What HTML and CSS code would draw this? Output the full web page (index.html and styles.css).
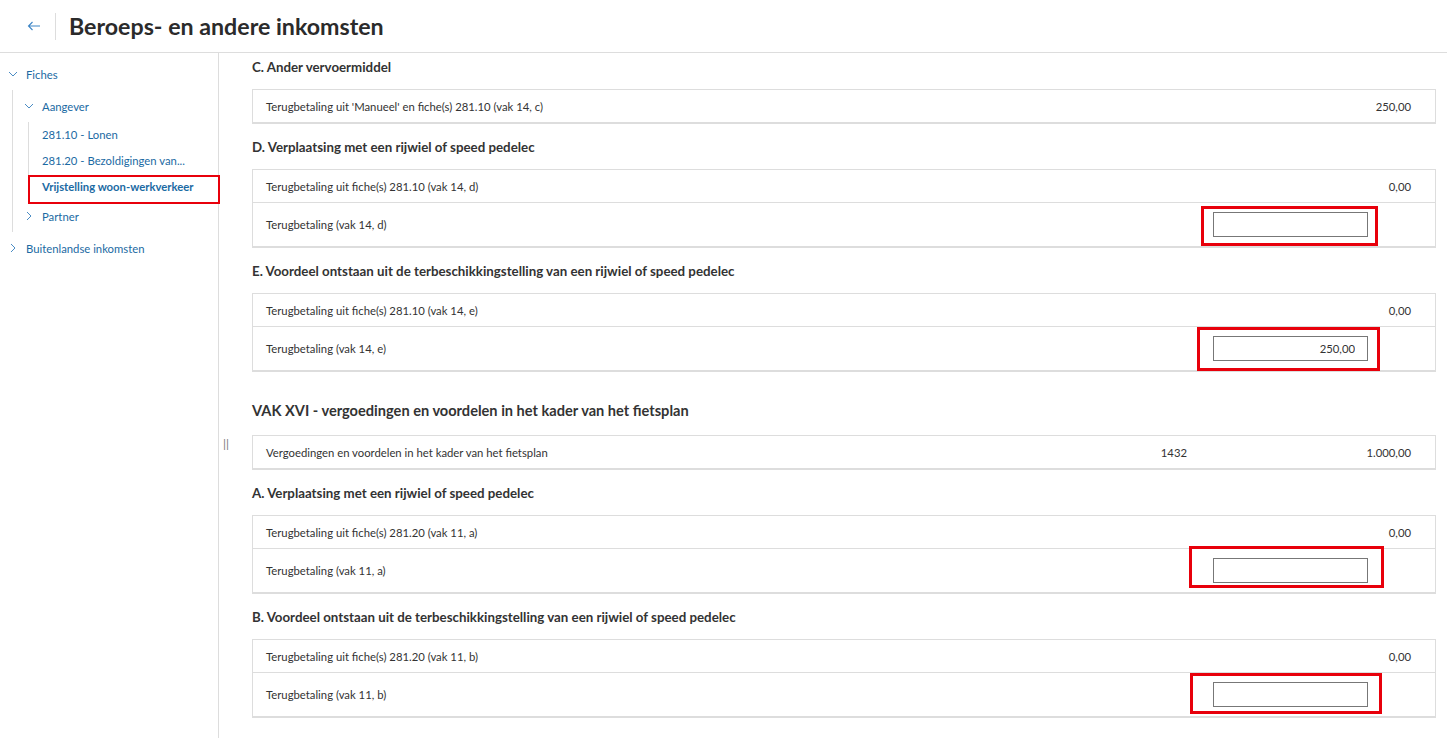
FILE: index.html
```html
<!DOCTYPE html>
<html lang="nl">
<head>
    <meta charset="UTF-8">
    <meta name="viewport" content="width=device-width, initial-scale=1.0">
    <title>Beroeps- en andere inkomsten</title>
    <link rel="stylesheet" href="styles.css">
</head>
<body>
    <header class="topbar">
        <button class="back" aria-label="Terug">
            <svg width="14" height="10" viewBox="0 0 14 10"><path d="M13 5H1.5M5.5 1L1.5 5l4 4" fill="none" stroke="currentColor" stroke-width="1.1"/></svg>
        </button>
        <span class="divider"></span>
        <h1>Beroeps- en andere inkomsten</h1>
    </header>

    <div class="layout">
        <nav class="sidebar">
            <div class="node">
                <div class="node-row">
                    <span class="chev"><svg width="10" height="6" viewBox="0 0 10 6"><path d="M1 1l4 4 4-4" fill="none" stroke="currentColor"/></svg></span>
                    <a href="#">Fiches</a>
                </div>
                <div class="children">
                    <div class="node">
                        <div class="node-row sub">
                            <span class="chev"><svg width="10" height="6" viewBox="0 0 10 6"><path d="M1 1l4 4 4-4" fill="none" stroke="currentColor"/></svg></span>
                            <a href="#">Aangever</a>
                        </div>
                        <div class="children leaves">
                            <a class="leaf" href="#">281.10 - Lonen</a>
                            <a class="leaf" href="#">281.20 - Bezoldigingen van...</a>
                            <a class="leaf active" href="#">Vrijstelling woon-werkverkeer<span class="mark-nav"></span></a>
                        </div>
                    </div>
                    <div class="node-row sub">
                        <span class="chev"><svg width="6" height="10" viewBox="0 0 6 10"><path d="M1 1l4 4-4 4" fill="none" stroke="currentColor"/></svg></span>
                        <a href="#">Partner</a>
                    </div>
                </div>
            </div>
            <div class="node-row">
                <span class="chev"><svg width="6" height="10" viewBox="0 0 6 10"><path d="M1 1l4 4-4 4" fill="none" stroke="currentColor"/></svg></span>
                <a href="#">Buitenlandse inkomsten</a>
            </div>
        </nav>

        <main class="content">
            <span class="splitter">||</span>

            <h3>C. Ander vervoermiddel</h3>
            <div class="card">
                <div class="row">
                    <span class="label">Terugbetaling uit 'Manueel' en fiche(s) 281.10 (vak 14, c)</span>
                    <span class="code"></span>
                    <span class="amount">250,00</span>
                </div>
            </div>

            <h3>D. Verplaatsing met een rijwiel of speed pedelec</h3>
            <div class="card">
                <div class="row">
                    <span class="label">Terugbetaling uit fiche(s) 281.10 (vak 14, d)</span>
                    <span class="code"></span>
                    <span class="amount">0,00</span>
                </div>
                <div class="row input-row">
                    <span class="label">Terugbetaling (vak 14, d)</span>
                    <span class="code"></span>
                    <span class="field"><input type="text"><span class="mark mark-d"></span></span>
                </div>
            </div>

            <h3>E. Voordeel ontstaan uit de terbeschikkingstelling van een rijwiel of speed pedelec</h3>
            <div class="card">
                <div class="row">
                    <span class="label">Terugbetaling uit fiche(s) 281.10 (vak 14, e)</span>
                    <span class="code"></span>
                    <span class="amount">0,00</span>
                </div>
                <div class="row input-row">
                    <span class="label">Terugbetaling (vak 14, e)</span>
                    <span class="code"></span>
                    <span class="field"><input type="text" value="250,00"><span class="mark mark-e"></span></span>
                </div>
            </div>

            <h2>VAK XVI - vergoedingen en voordelen in het kader van het fietsplan</h2>
            <div class="card">
                <div class="row">
                    <span class="label">Vergoedingen en voordelen in het kader van het fietsplan</span>
                    <span class="code">1432</span>
                    <span class="amount">1.000,00</span>
                </div>
            </div>

            <h3>A. Verplaatsing met een rijwiel of speed pedelec</h3>
            <div class="card">
                <div class="row">
                    <span class="label">Terugbetaling uit fiche(s) 281.20 (vak 11, a)</span>
                    <span class="code"></span>
                    <span class="amount">0,00</span>
                </div>
                <div class="row input-row">
                    <span class="label">Terugbetaling (vak 11, a)</span>
                    <span class="code"></span>
                    <span class="field"><input type="text"><span class="mark mark-a"></span></span>
                </div>
            </div>

            <h3>B. Voordeel ontstaan uit de terbeschikkingstelling van een rijwiel of speed pedelec</h3>
            <div class="card">
                <div class="row">
                    <span class="label">Terugbetaling uit fiche(s) 281.20 (vak 11, b)</span>
                    <span class="code"></span>
                    <span class="amount">0,00</span>
                </div>
                <div class="row input-row">
                    <span class="label">Terugbetaling (vak 11, b)</span>
                    <span class="code"></span>
                    <span class="field"><input type="text"><span class="mark mark-b"></span></span>
                </div>
            </div>
        </main>
    </div>
</body>
</html>
```

FILE: styles.css
```css
* {
    box-sizing: border-box;
}
html, body {
    height: 100%;
}
body {
    margin: 0;
    font-family: Lato, "Noto Sans", sans-serif;
    font-size: 11.3px;
    color: #333;
    background-color: #fff;
    overflow: hidden;
}
.topbar {
    height: 53px;
    display: flex;
    align-items: center;
    border-bottom: 1px solid #ddd;
}
.back {
    width: 28px;
    height: 28px;
    margin-left: 20px;
    padding: 0;
    border: none;
    background: none;
    color: #3d85c6;
    display: flex;
    align-items: center;
    justify-content: center;
    cursor: pointer;
}
.divider {
    width: 1px;
    height: 27px;
    margin: 0 13px 0 7px;
    background-color: #ddd;
}
h1 {
    margin: 0;
    font-size: 23.2px;
    font-weight: 700;
    color: #2b2b2b;
}
.layout {
    display: grid;
    grid-template-columns: 219px 1fr;
    height: calc(100% - 53px);
}
.sidebar {
    border-right: 1px solid #ddd;
    padding-top: 5px;
}
.sidebar a {
    color: #1b6aa3;
    text-decoration: none;
    white-space: nowrap;
}
.node-row {
    height: 32px;
    display: flex;
    align-items: center;
    padding-left: 4px;
}
.node-row.sub {
    padding-left: 7px;
}
.chev {
    width: 18px;
    margin-right: 4px;
    display: flex;
    justify-content: center;
    color: #4a8cc4;
}
.children {
    margin-left: 12px;
    border-left: 1px solid #ddd;
}
.children.leaves {
    margin-left: 15px;
}
.leaf {
    position: relative;
    display: block;
    height: 26px;
    line-height: 26px;
    padding-left: 13px;
}
.leaf.active {
    font-weight: 700;
}
.mark-nav {
    position: absolute;
    top: 1px;
    bottom: -4px;
    left: -1px;
    right: -2px;
    border: 2px solid #e8000b;
}
.content {
    position: relative;
    padding: 3px 11px 20px 33px;
}
.splitter {
    position: absolute;
    left: 4px;
    top: 383px;
    color: #777;
    font-size: 12px;
}
h3 {
    margin: 12px 0 11px;
    line-height: 22px;
    font-size: 13.3px;
    font-weight: 700;
    color: #333;
}
.content h3:first-of-type {
    margin-top: 0;
}
h2 {
    margin: 27px 0 12px;
    line-height: 24px;
    font-size: 14.6px;
    font-weight: 700;
    color: #333;
}
.card {
    border: 1px solid #ddd;
    border-bottom-width: 2px;
}
.row {
    min-height: 32px;
    display: grid;
    grid-template-columns: 1fr 60px 198px;
    column-gap: 26px;
    align-items: center;
    padding: 0 24px 0 13px;
}
.row + .row {
    border-top: 1px solid #ddd;
}
.input-row {
    min-height: 44px;
}
.code {
    text-align: right;
}
.amount {
    text-align: right;
}
.field {
    position: relative;
    width: 155px;
    height: 25px;
}
.field input {
    width: 155px;
    height: 25px;
    border: 1px solid #777;
    padding: 0 12px;
    font: inherit;
    color: #333;
    text-align: right;
}
.mark {
    position: absolute;
    border: 3px solid #e8000b;
}
.mark-d {
    top: -6px;
    bottom: -9px;
    left: -12px;
    right: -10px;
}
.mark-e {
    top: -9px;
    bottom: -10px;
    left: -16px;
    right: -12px;
}
.mark-a {
    top: -12px;
    bottom: -5px;
    left: -24px;
    right: -16px;
}
.mark-b {
    top: -9px;
    bottom: -7px;
    left: -23px;
    right: -14px;
}
```
